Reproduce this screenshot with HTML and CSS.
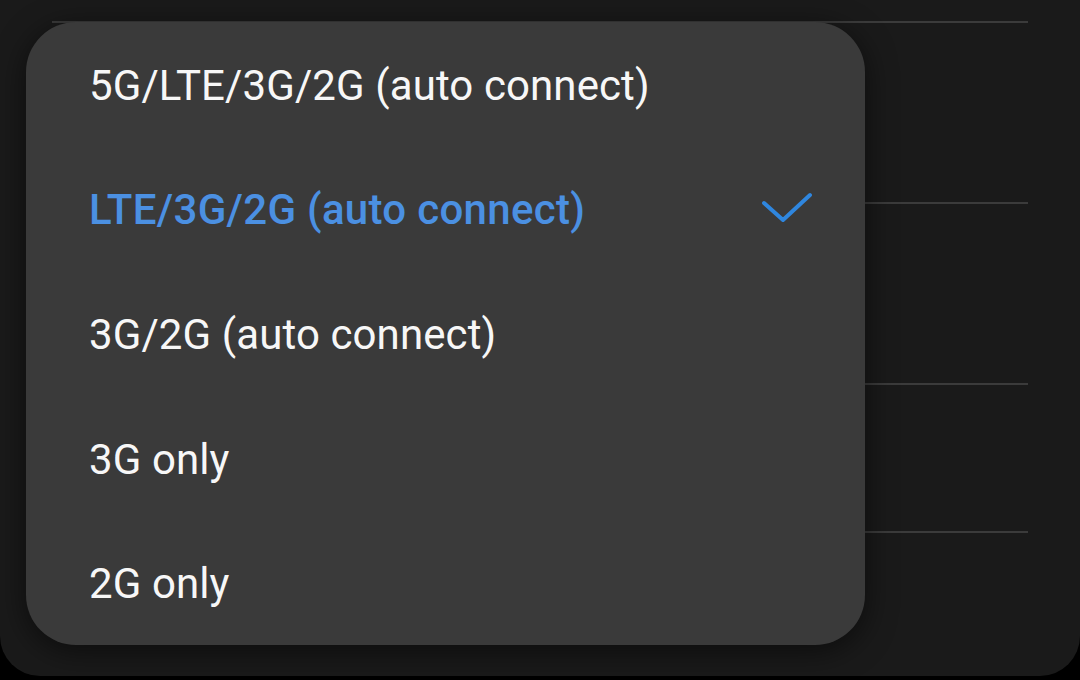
FILE: index.html
```html
<!DOCTYPE html>
<html>
<head>
<meta charset="utf-8">
<link rel="stylesheet" href="styles.css">
</head>
<body>
<div class="screen">
  <div class="list">
    <div class="spacer"></div>
    <div class="row row-tall"></div>
    <div class="row row-tall"></div>
    <div class="row row-mid"></div>
    <div class="row row-last"></div>
  </div>
  <div class="menu">
    <div class="item">5G/LTE/3G/2G (auto connect)</div>
    <div class="item selected">
      <span>LTE/3G/2G (auto connect)</span>
      <svg class="check" width="52" height="34" viewBox="0 0 52 34">
        <polyline points="3,11 22,28 49,3" fill="none" stroke="#2f86de" stroke-width="4" stroke-linecap="round" stroke-linejoin="round"/>
      </svg>
    </div>
    <div class="item">3G/2G (auto connect)</div>
    <div class="item">3G only</div>
    <div class="item">2G only</div>
  </div>
</div>
</body>
</html>
```

FILE: styles.css
```css
html, body {
  margin: 0;
  padding: 0;
  background: #000;
  width: 1080px;
  height: 680px;
  overflow: hidden;
  font-family: Roboto, "Noto Sans", sans-serif;
}

.screen {
  position: relative;
  width: 1080px;
  height: 680px;
}

.list {
  height: 676px;
  background: #1a1a1a;
  border-radius: 0 0 40px 40px;
  padding: 0 52px;
  display: flex;
  flex-direction: column;
  box-sizing: border-box;
  overflow: hidden;
}

.spacer {
  height: 21px;
  flex: none;
}

.row {
  border-top: 2px solid #3b3b3b;
  flex: none;
  box-sizing: border-box;
}

.row-tall { height: 181px; }
.row-mid { height: 148px; }
.row-last { flex: 1; }

.menu {
  position: absolute;
  left: 26px;
  top: 22px;
  width: 839px;
  height: 623px;
  background: #3a3a3a;
  border-radius: 50px;
  box-shadow: 0 6px 30px rgba(0, 0, 0, 0.55);
  display: flex;
  flex-direction: column;
}

.item {
  flex: 1;
  display: flex;
  align-items: center;
  justify-content: space-between;
  padding: 2px 52px 0 63px;
  color: #f7f7f7;
  font-size: 42px;
  letter-spacing: 0.1px;
}

.item.selected {
  color: #4b90e2;
  font-weight: 500;
  letter-spacing: 0.3px;
}

.check {
  display: block;
  margin-top: -2px;
}
```
